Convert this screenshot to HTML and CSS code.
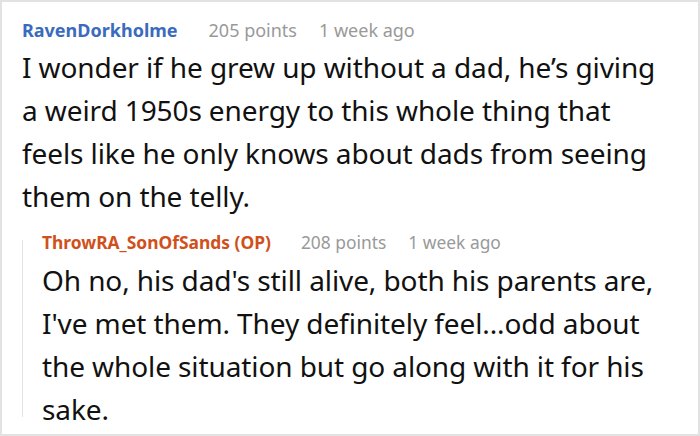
FILE: index.html
```html
<!DOCTYPE html>
<html>
<head>
<meta charset="utf-8">
<link rel="stylesheet" href="styles.css">
</head>
<body>
<div class="card">
  <div class="comment">
    <div class="meta">
      <span class="user user-blue">RavenDorkholme</span>
      <span class="points">205 points</span>
      <span class="time">1 week ago</span>
    </div>
    <p class="text">I wonder if he grew up without a dad, he’s giving<br>a weird 1950s energy to this whole thing that<br>feels like he only knows about dads from seeing<br>them on the telly.</p>
  </div>
  <div class="reply">
    <div class="meta">
      <span class="user user-orange">ThrowRA_SonOfSands (OP)</span>
      <span class="points">208 points</span>
      <span class="time">1 week ago</span>
    </div>
    <p class="text">Oh no, his dad's still alive, both his parents are,<br>I've met them. They definitely feel...odd about<br>the whole situation but go along with it for his<br>sake.</p>
  </div>
</div>
</body>
</html>
```

FILE: styles.css
```css
html, body {
  margin: 0;
  padding: 0;
  background: #ffffff;
}

.card {
  box-sizing: border-box;
  width: 700px;
  height: 436px;
  border: 2px solid #e2e2e2;
  padding: 17px 20px 0 20px;
  font-family: "Noto Sans", "Open Sans", sans-serif;
  overflow: hidden;
}

.meta {
  display: flex;
  align-items: baseline;
  gap: 22px;
  font-size: 18px;
  line-height: 22px;
  color: #999999;
}

.user {
  font-weight: 700;
  margin-right: 9px;
}

.user-blue { color: #3a6bbd; }
.user-orange { color: #d0501b; }

.text {
  margin: 5px 0 0 0;
  font-size: 28px;
  line-height: 43px;
  letter-spacing: -0.1px;
  color: #111111;
}

.reply {
  margin-top: 13px;
  padding-left: 20px;
  background: linear-gradient(#e2e2e2, #e2e2e2) no-repeat 0 9px / 1px calc(100% - 23px);
}

.reply .meta {
  font-size: 17.4px;
}

.reply .user {
  margin-right: 8px;
}

.reply .text {
  margin-top: 6px;
}
```
